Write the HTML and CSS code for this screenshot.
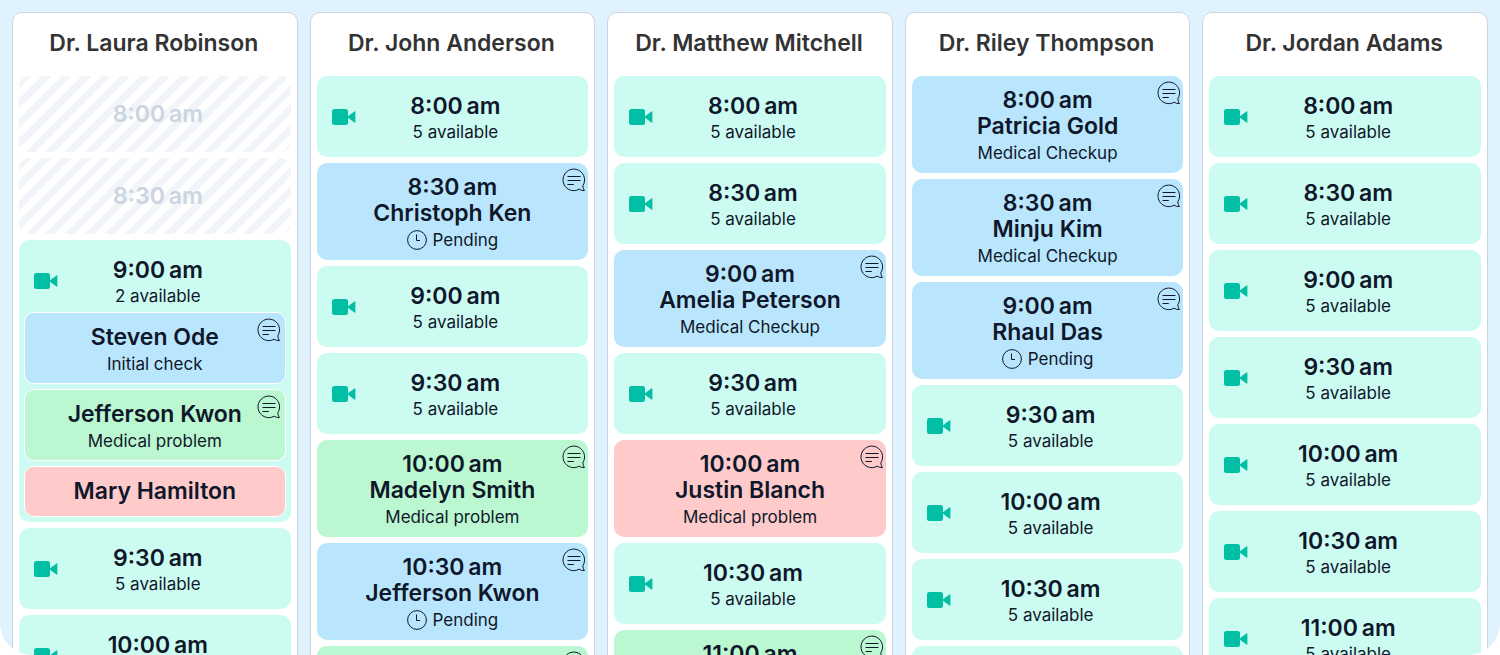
FILE: index.html
```html
<!DOCTYPE html>
<html lang="en">

<head>
	<title>Schedule</title>
	<meta charset="UTF-8">
	<meta name="viewport" content="width=device-width, initial-scale=1.0">
	<link rel="stylesheet" href="styles.css">
</head>

<body>
	<svg class="sprite" aria-hidden="true">
		<symbol id="video" viewBox="0 0 24 16">
			<rect x="0" y="0" width="16" height="16" rx="2.5" />
			<path d="M16 7.2 L22.4 2.4 Q23.4 2 23.4 3 V13 Q23.4 14 22.4 13.6 L16 8.8 Z" />
		</symbol>
		<symbol id="chat" viewBox="0 0 24 24">
			<path d="M20.8 17.8 A10.800 10.800 0 1 0 17.200 21.200 Q19.500 22.800 22.400 22.600 Q21 20.400 20.800 17.800 Z" />
			<path d="M5.500 8.500 H18.500 M5.500 12.500 H18.500 M5.500 16.500 H11.800" />
		</symbol>
		<symbol id="clock" viewBox="0 0 20 20">
			<circle cx="10" cy="10" r="9.400" />
			<path d="M9.500 4.500 V10.500 H13" />
		</symbol>
	</svg>

	<main class="schedule">
		<section class="doctor">
			<h2>Dr. Laura Robinson</h2>
			<div class="slot closed">
				<p class="time">8:00&thinsp;am</p>
			</div>
			<div class="slot closed">
				<p class="time">8:30&thinsp;am</p>
			</div>
			<div class="slot group">
				<div class="open">
					<svg class="video"><use href="#video" /></svg>
					<div class="info">
						<p class="time">9:00&thinsp;am</p>
						<p class="note">2 available</p>
					</div>
				</div>
				<div class="booked patient blue">
					<p class="name">Steven Ode</p>
					<p class="detail">Initial check</p>
					<button class="chat" aria-label="Notes"><svg><use href="#chat" /></svg></button>
				</div>
				<div class="booked patient green">
					<p class="name">Jefferson Kwon</p>
					<p class="detail">Medical problem</p>
					<button class="chat" aria-label="Notes"><svg><use href="#chat" /></svg></button>
				</div>
				<div class="booked patient red">
					<p class="name">Mary Hamilton</p>
				</div>
			</div>
			<div class="slot open">
				<svg class="video"><use href="#video" /></svg>
				<div class="info">
					<p class="time">9:30&thinsp;am</p>
					<p class="note">5 available</p>
				</div>
			</div>
			<div class="slot open">
				<svg class="video"><use href="#video" /></svg>
				<div class="info">
					<p class="time">10:00&thinsp;am</p>
				</div>
			</div>
		</section>

		<section class="doctor">
			<h2>Dr. John Anderson</h2>
			<div class="slot open">
				<svg class="video"><use href="#video" /></svg>
				<div class="info">
					<p class="time">8:00&thinsp;am</p>
					<p class="note">5 available</p>
				</div>
			</div>
			<div class="slot booked blue">
				<p class="time">8:30&thinsp;am</p>
				<p class="name">Christoph Ken</p>
				<p class="detail"><svg class="clock"><use href="#clock" /></svg>Pending</p>
				<button class="chat" aria-label="Notes"><svg><use href="#chat" /></svg></button>
			</div>
			<div class="slot open">
				<svg class="video"><use href="#video" /></svg>
				<div class="info">
					<p class="time">9:00&thinsp;am</p>
					<p class="note">5 available</p>
				</div>
			</div>
			<div class="slot open">
				<svg class="video"><use href="#video" /></svg>
				<div class="info">
					<p class="time">9:30&thinsp;am</p>
					<p class="note">5 available</p>
				</div>
			</div>
			<div class="slot booked green">
				<p class="time">10:00&thinsp;am</p>
				<p class="name">Madelyn Smith</p>
				<p class="detail">Medical problem</p>
				<button class="chat" aria-label="Notes"><svg><use href="#chat" /></svg></button>
			</div>
			<div class="slot booked blue">
				<p class="time">10:30&thinsp;am</p>
				<p class="name">Jefferson Kwon</p>
				<p class="detail"><svg class="clock"><use href="#clock" /></svg>Pending</p>
				<button class="chat" aria-label="Notes"><svg><use href="#chat" /></svg></button>
			</div>
			<div class="slot booked green">
				<button class="chat" aria-label="Notes"><svg><use href="#chat" /></svg></button>
			</div>
		</section>

		<section class="doctor">
			<h2>Dr. Matthew Mitchell</h2>
			<div class="slot open">
				<svg class="video"><use href="#video" /></svg>
				<div class="info">
					<p class="time">8:00&thinsp;am</p>
					<p class="note">5 available</p>
				</div>
			</div>
			<div class="slot open">
				<svg class="video"><use href="#video" /></svg>
				<div class="info">
					<p class="time">8:30&thinsp;am</p>
					<p class="note">5 available</p>
				</div>
			</div>
			<div class="slot booked blue">
				<p class="time">9:00&thinsp;am</p>
				<p class="name">Amelia Peterson</p>
				<p class="detail">Medical Checkup</p>
				<button class="chat" aria-label="Notes"><svg><use href="#chat" /></svg></button>
			</div>
			<div class="slot open">
				<svg class="video"><use href="#video" /></svg>
				<div class="info">
					<p class="time">9:30&thinsp;am</p>
					<p class="note">5 available</p>
				</div>
			</div>
			<div class="slot booked red">
				<p class="time">10:00&thinsp;am</p>
				<p class="name">Justin Blanch</p>
				<p class="detail">Medical problem</p>
				<button class="chat" aria-label="Notes"><svg><use href="#chat" /></svg></button>
			</div>
			<div class="slot open">
				<svg class="video"><use href="#video" /></svg>
				<div class="info">
					<p class="time">10:30&thinsp;am</p>
					<p class="note">5 available</p>
				</div>
			</div>
			<div class="slot booked green">
				<p class="time">11:00&thinsp;am</p>
				<button class="chat" aria-label="Notes"><svg><use href="#chat" /></svg></button>
			</div>
		</section>

		<section class="doctor">
			<h2>Dr. Riley Thompson</h2>
			<div class="slot booked blue">
				<p class="time">8:00&thinsp;am</p>
				<p class="name">Patricia Gold</p>
				<p class="detail">Medical Checkup</p>
				<button class="chat" aria-label="Notes"><svg><use href="#chat" /></svg></button>
			</div>
			<div class="slot booked blue">
				<p class="time">8:30&thinsp;am</p>
				<p class="name">Minju Kim</p>
				<p class="detail">Medical Checkup</p>
				<button class="chat" aria-label="Notes"><svg><use href="#chat" /></svg></button>
			</div>
			<div class="slot booked blue">
				<p class="time">9:00&thinsp;am</p>
				<p class="name">Rhaul Das</p>
				<p class="detail"><svg class="clock"><use href="#clock" /></svg>Pending</p>
				<button class="chat" aria-label="Notes"><svg><use href="#chat" /></svg></button>
			</div>
			<div class="slot open">
				<svg class="video"><use href="#video" /></svg>
				<div class="info">
					<p class="time">9:30&thinsp;am</p>
					<p class="note">5 available</p>
				</div>
			</div>
			<div class="slot open">
				<svg class="video"><use href="#video" /></svg>
				<div class="info">
					<p class="time">10:00&thinsp;am</p>
					<p class="note">5 available</p>
				</div>
			</div>
			<div class="slot open">
				<svg class="video"><use href="#video" /></svg>
				<div class="info">
					<p class="time">10:30&thinsp;am</p>
					<p class="note">5 available</p>
				</div>
			</div>
			<div class="slot open"></div>
		</section>

		<section class="doctor">
			<h2>Dr. Jordan Adams</h2>
			<div class="slot open">
				<svg class="video"><use href="#video" /></svg>
				<div class="info">
					<p class="time">8:00&thinsp;am</p>
					<p class="note">5 available</p>
				</div>
			</div>
			<div class="slot open">
				<svg class="video"><use href="#video" /></svg>
				<div class="info">
					<p class="time">8:30&thinsp;am</p>
					<p class="note">5 available</p>
				</div>
			</div>
			<div class="slot open">
				<svg class="video"><use href="#video" /></svg>
				<div class="info">
					<p class="time">9:00&thinsp;am</p>
					<p class="note">5 available</p>
				</div>
			</div>
			<div class="slot open">
				<svg class="video"><use href="#video" /></svg>
				<div class="info">
					<p class="time">9:30&thinsp;am</p>
					<p class="note">5 available</p>
				</div>
			</div>
			<div class="slot open">
				<svg class="video"><use href="#video" /></svg>
				<div class="info">
					<p class="time">10:00&thinsp;am</p>
					<p class="note">5 available</p>
				</div>
			</div>
			<div class="slot open">
				<svg class="video"><use href="#video" /></svg>
				<div class="info">
					<p class="time">10:30&thinsp;am</p>
					<p class="note">5 available</p>
				</div>
			</div>
			<div class="slot open">
				<svg class="video"><use href="#video" /></svg>
				<div class="info">
					<p class="time">11:00&thinsp;am</p>
					<p class="note">5 available</p>
				</div>
			</div>
		</section>
	</main>
</body>

</html>
```

FILE: styles.css
```css
* {
	box-sizing: border-box;
}

body {
	font-family: Inter, sans-serif;
	color: #0f172a;
	background-color: #fff;
	margin: 0;
}

h2,
p {
	margin: 0;
}

.sprite {
	position: absolute;
	width: 0;
	height: 0;
}

.schedule {
	display: grid;
	grid-template-columns: repeat(5, 1fr);
	gap: 12px;
	height: 100vh;
	padding: 12px;
	overflow: hidden;
	background-color: #e0f2fe;
	border-radius: 0 0 32px 32px;
}

.doctor {
	display: flex;
	flex-direction: column;
	gap: 6px;
	padding: 0 6px 6px;
	background-color: #fff;
	border: 1px solid #cbd5e1;
	border-radius: 10px;
	text-align: center;
}

.doctor h2 {
	padding: 15px 2px 12px 0;
	color: #333;
	font-size: 23px;
	font-weight: 600;
	line-height: 30px;
}

.slot {
	flex-shrink: 0;
	border-radius: 10px;
}

.time,
.name {
	font-size: 23px;
	font-weight: 600;
	line-height: 26px;
}

.note,
.detail {
	font-size: 17px;
	line-height: 26px;
}

/* free slots */
.open {
	display: flex;
	align-items: flex-start;
	padding: 0 33px 0 15px;
}

.slot.open {
	min-height: 81px;
}

.open,
.group {
	background-color: #ccfbf1;
}

.info {
	flex: 1;
	padding-top: 17px;
}

.video {
	width: 24px;
	height: 16px;
	margin-top: 33px;
	fill: #00bfa5;
}

.closed {
	padding: 25px 0 25px 6px;
	color: #cbd5e1;
	background: repeating-linear-gradient(135deg, #fff 0 2px, #f1f5f9 2px 9px, #fff 9px 14px);
}

/* booked slots */
.booked {
	position: relative;
	padding: 11px 0 6px;
}

.slot.booked {
	min-height: 97px;
}

.detail {
	display: flex;
	justify-content: center;
	align-items: center;
	gap: 6px;
	line-height: 28px;
}

.blue {
	background-color: #bae6fd;
}

.green {
	background-color: #bbf7d0;
}

.red {
	background-color: #fecaca;
}

.clock {
	width: 20px;
	height: 20px;
	fill: none;
	stroke: #0f172a;
}

.chat {
	position: absolute;
	top: 5px;
	right: 2px;
	width: 24px;
	height: 24px;
	padding: 0;
	border: 0;
	background: none;
}

.chat svg {
	display: block;
	width: 24px;
	height: 24px;
	fill: none;
	stroke: #0f172a;
}

/* several patients in one slot */
.group {
	display: flex;
	flex-direction: column;
	gap: 5px;
	padding: 0 5px 5px;
}

.group .open {
	height: 67px;
	padding: 0 28px 0 10px;
	border-radius: 10px;
}

.patient {
	min-height: 51px;
	padding-bottom: 5px;
	border: 1px solid #fff;
	border-radius: 10px;
}

.patient .chat {
	right: 4px;
}
```
